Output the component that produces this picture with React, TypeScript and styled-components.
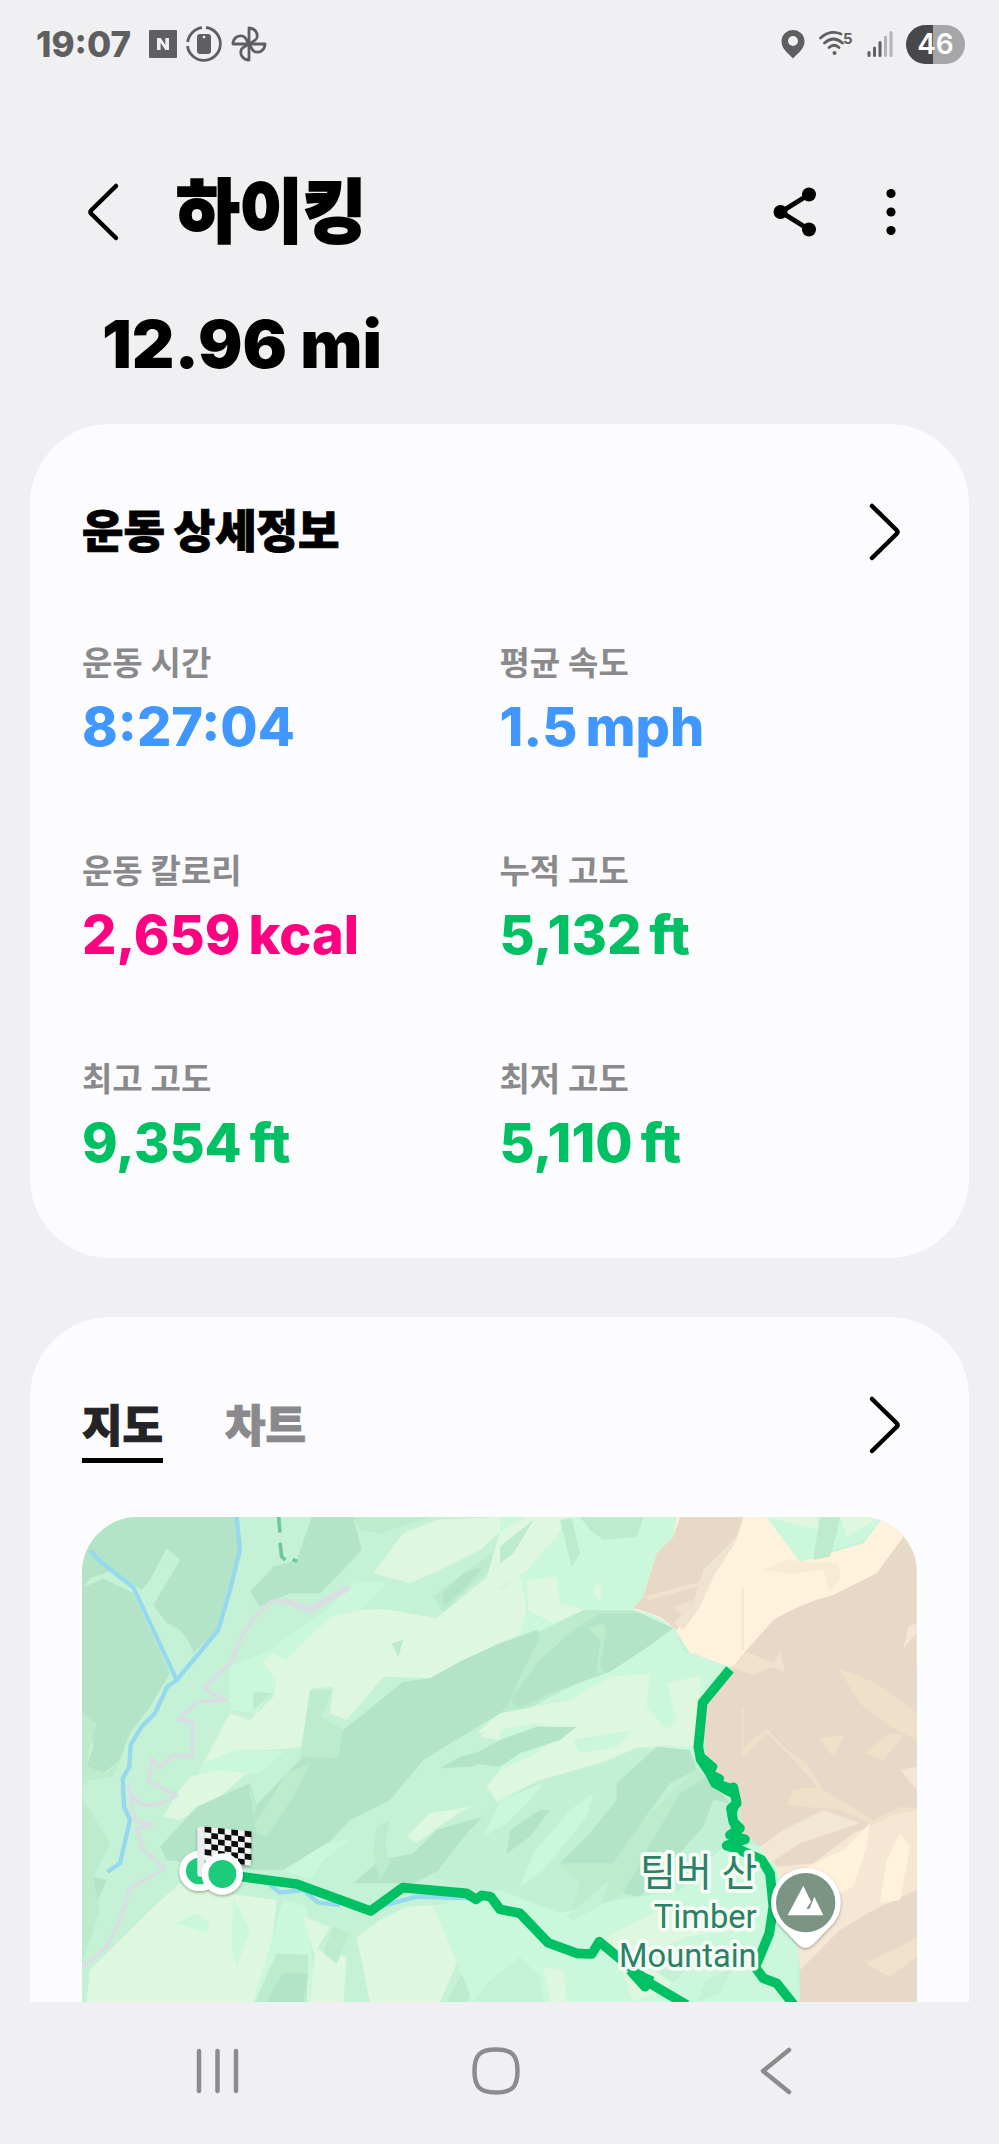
import React, { useState } from 'react';
import styled, { createGlobalStyle } from 'styled-components';

const sans = `Inter, 'Noto Sans CJK KR', sans-serif`;

const GlobalStyle = createGlobalStyle`
  * { box-sizing: border-box; }
  body { margin: 0; background: #f0f0f2; color: #000; font-family: ${sans}; }
  button { border: 0; padding: 0; background: none; font: inherit; color: inherit; cursor: pointer; }
  svg { display: block; }
`;

const Screen = styled.div`
  display: flex;
  flex-direction: column;
  height: 100vh;
  min-height: 1700px;
`;

const StatusBar = styled.div`
  display: flex;
  align-items: center;
  justify-content: space-between;
  height: 88px;
  padding: 0 34px 0 36px;
  color: #5f5f61;
`;

const StatusGroup = styled.div<{ $gap: number }>`
  display: flex;
  align-items: center;
  gap: ${(p) => p.$gap}px;
`;

const Clock = styled.time`
  margin-right: 10px;
  font-size: 35px;
  line-height: 40px;
  font-weight: 800;
`;

const Battery = styled.span`
  display: flex;
  align-items: center;
  justify-content: center;
  width: 59px;
  height: 39px;
  border-radius: 20px;
  background: linear-gradient(90deg, #48484a 46%, #a6a6a8 46%);
  color: #fff;
  font-size: 28px;
  font-weight: 600;
`;

const Header = styled.header`
  display: flex;
  align-items: center;
  height: 120px;
  margin-top: 64px;
  padding: 0 80px 0 75px;
`;

const IconButton = styled.button`
  display: flex;
  align-items: center;
  justify-content: center;
  width: 56px;
  height: 72px;
`;

const Title = styled.h1`
  flex: 1;
  margin: 0;
  padding-left: 45px;
  font-size: 69px;
  line-height: 100px;
  font-weight: 900;
  -webkit-text-stroke: 2px currentColor;
`;

const HeaderActions = styled.div`
  display: flex;
  gap: 40px;
`;

const Distance = styled.p`
  margin: 32px 0 40px;
  padding: 0 102px;
  font-size: 66px;
  line-height: 80px;
  font-weight: 900;
`;

const Card = styled.section<{ $fill?: boolean }>`
  display: flex;
  flex-direction: column;
  margin: 0 30px;
  padding: 64px 52px 83px;
  border-radius: 80px;
  background: #fcfcfe;
  ${(p) => p.$fill && `
    flex: 1;
    min-height: 0;
    margin-top: 59px;
    padding-bottom: 0;
    border-radius: 80px 80px 0 0;
  `}
`;

const CardHead = styled.div`
  display: flex;
  align-items: center;
  justify-content: space-between;
  height: 88px;
  padding-right: 4px;
`;

const CardTitle = styled.h2`
  margin: 0;
  font-size: 45px;
  line-height: 64px;
  font-weight: 900;
  -webkit-text-stroke: 1px currentColor;
`;

const Stats = styled.dl`
  display: grid;
  grid-template-columns: 1fr 1fr;
  row-gap: 90px;
  margin: 65px 0 0;
`;

const Label = styled.dt`
  font-size: 33px;
  line-height: 44px;
  font-weight: 700;
  color: #8a8a8c;
`;

const Value = styled.dd<{ $color: string }>`
  display: flex;
  gap: 8px;
  margin: 10px 0 0;
  font-size: 54px;
  line-height: 64px;
  font-weight: 800;
  color: ${(p) => p.$color};
`;

const Tabs = styled.div`
  display: flex;
  gap: 62px;
`;

const Tab = styled.button<{ $active: boolean }>`
  border: solid transparent;
  border-width: 7px 0 5px;
  border-bottom-color: ${(p) => (p.$active ? '#000' : 'transparent')};
  color: ${(p) => (p.$active ? '#242426' : '#8a8a8c')};
  font-size: 44px;
  line-height: 64px;
  font-weight: 900;
  -webkit-text-stroke: 1px currentColor;
`;

const MapFrame = styled.div`
  flex: 1;
  min-height: 0;
  margin-top: 48px;
  border-radius: 56px 56px 0 0;
  overflow: hidden;
  background: #c5f2d7;
`;

const MapSvg = styled.svg`
  width: 100%;
  height: 100%;
`;

const NavBar = styled.nav`
  display: flex;
  align-items: center;
  justify-content: space-around;
  flex: none;
  height: 142px;
  padding: 0 83px 4px 77px;
  color: #8c8c8e;
`;

const NavButton = styled.button`
  display: flex;
  justify-content: center;
  width: 96px;
`;

const Chevron = ({ back = false }: { back?: boolean }) => (
  <svg width="36" height="60" viewBox="0 0 36 60" fill="none" stroke="currentColor" strokeWidth="4.5" strokeLinecap="round" strokeLinejoin="round">
    <path d={back ? 'M31 4 6.500 28Q4.500 30 6.500 32L31 56' : 'M5 4 29.500 28Q31.500 30 29.500 32L5 56'} />
  </svg>
);

const StatusLeft = () => (
  <StatusGroup $gap={8}>
    <Clock>19:07</Clock>
    <svg width="28" height="28" viewBox="0 0 28 28">
      <rect width="28" height="28" rx="1" fill="currentColor" />
      <path d="M8 20V8H11.800L16.400 15V8H20V20H16.400L11.600 12.800V20Z" fill="#f0f0f2" />
    </svg>
    <svg width="38" height="38" viewBox="0 0 38 38" fill="none" stroke="currentColor" strokeWidth="2.800">
      <path d="M21 2.500A16.500 16.500 0 1 1 2.500 21M2.700 17A16.500 16.500 0 0 1 17 2.700" />
      <rect x="12" y="9" width="14" height="20" rx="3" fill="currentColor" stroke="none" />
      <circle cx="19" cy="12" r="1.300" fill="#f0f0f2" stroke="none" />
    </svg>
    <svg width="36" height="36" viewBox="0 0 36 36" fill="none" stroke="currentColor" strokeWidth="2.800" strokeLinejoin="round">
      {[0, 90, 180, 270].map((a) => (
        <path key={a} transform={`rotate(${a} 18 18)`} d="M18 18V2C24 2 27 7 26 11.500C25 15.500 21 15.500 18 18Z" />
      ))}
    </svg>
  </StatusGroup>
);

const StatusRight = () => (
  <StatusGroup $gap={13}>
    <svg width="24" height="30" viewBox="0 0 24 30">
      <path d="M12 1a11.500 11.500 0 0 0-11.500 11.500C.500 20 7 24 12 29.500 17 24 23.500 20 23.500 12.500A11.500 11.500 0 0 0 12 1Zm0 6a5 5 0 1 1 0 10 5 5 0 0 1 0-10Z" fill="currentColor" />
    </svg>
    <svg width="36" height="34" viewBox="0 0 36 34" fill="none" stroke="currentColor" strokeWidth="2.800" strokeLinecap="round">
      <path d="M2.500 11Q12 2.500 23 7M6.500 16Q15.500 8 24.500 16M11 20.500Q16 16 21 20.500" />
      <circle cx="16.500" cy="26" r="2" fill="currentColor" stroke="none" />
      <text x="25" y="17" fontSize="15" fontWeight="700" fill="currentColor" stroke="none">5</text>
    </svg>
    <svg width="26" height="28" viewBox="0 0 26 28" stroke="currentColor" strokeWidth="3" strokeLinecap="round">
      <path d="M2 22.500V25.500M7.500 18V25.500M13 12.500V25.500" />
      <path d="M18.500 7V25.500M24 2.500V25.500" stroke="#b4b4b6" />
    </svg>
    <Battery>46</Battery>
  </StatusGroup>
);

const MINT = '#cbf7dd';
const DARK = '#b3e4c7';
const MID = '#bcebce';
const PALE = '#def7df';
const SAND = '#e7d8c8';
const CREAM = '#fff2dc';

const west: [string, string][] = [
  [DARK, 'M36 51H500L510 150 470 280 440 390 370 460Q350 390 290 370L250 315 330 180 290 145 240 240 215 270 130 210 60 235 36 270Z'],
  [DARK, 'M36 265 100 235 190 280 300 520 240 620 180 700 150 780 100 820 50 800 70 740 60 670 36 640Z'],
  [MID, 'M36 640 80 670 60 740 50 800 110 820 150 780 130 830 60 840 36 860Z'],
  [DARK, 'M36 890 60 960 90 1000 70 1130 110 1140 70 1230 36 1330Z'],
  [MID, 'M60 930 120 1030 70 1130 90 1230 36 1390V900Z'],
  [DARK, 'M725 51H850L875 150 790 240 750 280 660 280 570 320 540 275 610 200 680 180Z'],
  [MID, 'M850 51 870 90 930 100 1080 51Z'],
  [PALE, 'M910 220 1000 100 1100 60 1290 51V95L1230 150 1130 200 1020 250Z'],
  [MID, 'M1090 290 1160 235 1290 140V190L1200 260 1120 335Z'],
  [DARK, 'M1120 280 1180 220 1240 200 1180 270 1120 320Z'],
  [MINT, 'M480 500 600 450 640 420 760 340 850 250 950 250 860 340 720 430 640 520 560 640 480 630Z'],
  [PALE, 'M610 460 650 480Q720 400 790 350 880 320 960 330L1100 355 1290 200V430L1180 480 1080 535 940 530 830 660 780 640 790 560 725 565 700 740 600 750 500 750 400 790 480 640 540 660 610 590 620 540 580 490Z'],
  [MID, 'M550 575 605 580 550 630ZM965 430 1000 420 985 470Z'],
  [MID, 'M720 570 785 570 755 650 820 690 810 775 690 770Z'],
  [MINT, 'M400 790 500 750 640 755 570 820 380 830Z'],
  [PALE, 'M360 830 440 810 530 820 450 890 330 960 280 950 320 880Z'],
  [DARK, 'M1290 430 1180 480 1080 535 1000 545 820 690 805 775 700 770 640 830 560 915 540 850 380 920 270 1040 290 1080 560 1110 700 1110 840 960 960 900 1060 780 1290 640Z'],
  [MID, 'M535 850 560 915 550 970 600 900 650 820 720 790 670 890 590 1010 560 1000Z'],
  [PALE, 'M1290 650 1230 710 1290 720ZM1200 920 1080 940 1010 1010 1040 1030 1120 970ZM1290 840 1260 850 1290 880Z'],
  [DARK, 'M1290 740 1170 770 1110 805 1200 800 1290 775ZM1290 940 1200 960 1100 990 1030 1060 930 1080 850 1150 1030 1150 1150 1090 1180 1140 1290 1050Z'],
  [MID, 'M920 980 960 960 945 1030 960 1090 930 1140 910 1060Z'],
  [MINT, 'M640 1110 770 1030 840 1020 760 1080 720 1140Z'],
  [PALE, 'M50 1506 60 1410 250 1220 330 1150 470 1180 620 1200 600 1380 550 1506Z'],
  [MINT, 'M490 1190 540 1290 500 1400 485 1340ZM320 1270 380 1240 420 1270 410 1300ZM640 1200 710 1220 740 1506H550Z'],
  [PALE, 'M700 1250 780 1280 740 1350 830 1370 820 1506H720L735 1370ZM860 1310 930 1260 1010 1220 1200 1210 1260 1240 1160 1390 1110 1506H900Z'],
  [MID, 'M620 1360 715 1365 710 1506H555ZM1200 1380 1240 1370 1190 1506H1130ZM790 1280 840 1300 800 1390 760 1360Z'],
  [DARK, 'M640 1420 715 1420 700 1506H590Z'],
  [MINT, 'M1190 1310 1290 1290V1506H1200L1240 1370 1170 1380Z'],
];

const east: [string, string][] = [
  [MINT, 'M0 51H530L520 110 470 160 430 290 400 330 250 340 100 400 0 430Z'],
  [PALE, 'M0 95 80 51H200L170 110 80 210 -60 300ZM-80 340 60 220 80 330 60 400 0 430ZM80 240 170 230 180 310 255 330 160 370 85 330ZM290 240 305 270 300 300 280 280Z'],
  [MID, 'M0 140 100 60 40 160 0 190ZM180 60 215 55 240 160 215 200Z'],
  [MID, 'M240 51H430L410 110 310 120 270 90Z'],
  [CREAM, 'M530 51H800L900 185 1090 130 1150 51H1290V500H690L570 460 520 380 400 330 430 290 470 160 520 110Z'],
  [SAND, 'M540 51H730L710 110 610 210 580 310 530 390 480 350 420 330 400 325 430 290 470 160 520 110Z'],
  [SAND, 'M1210 110 1250 130V1506H900V1360L860 1170 780 1040 730 1000 710 870 620 790 605 600 700 500 740 450 820 360Q900 310 1000 285L1130 220Z'],
  [MINT, 'M0 470 260 340 400 330Q490 345 530 400 540 460 580 470L690 505 605 600 580 740 600 820 690 910 690 1020 780 1040Q850 1100 880 1220 910 1300 890 1400L900 1506H0Z'],
  [MID, 'M250 330 400 330 510 380 430 440 330 500 210 560 60 640 0 640V430L110 400Z'],
  [DARK, 'M300 340 420 340 520 385 430 450 330 515 150 580 60 625 30 600 120 480 220 390Z'],
  [DARK, 'M0 430 110 390 120 410 70 510 20 620 0 640Z'],
  [MID, 'M265 385 310 370 320 400 300 490 315 520 290 520 300 420Z'],
  [PALE, 'M-70 700 0 640 210 600 330 530 480 520 600 500 600 600 580 740 480 735 390 750 300 800 200 830 100 870 0 920 -40 860 0 810 110 760 200 690 100 670 0 690Z'],
  [MINT, 'M460 450 580 460 690 505 500 550 530 660 500 690 440 620ZM220 720 330 700 400 690 350 740 240 760Z'],
  [DARK, 'M-120 785 0 720 110 680 230 680 180 720 60 760 0 800Z'],
  ['#c2f0d4', 'M-100 1000 0 900 120 840 300 790 420 740 620 780 700 880 690 1020 530 1180 300 1220 180 1250 0 1200 -200 1130Z'],
  [MINT, 'M0 900 130 850 90 900 20 970 -50 1010ZM210 930 280 880 260 950 130 1110 60 1160 100 1060Z'],
  [DARK, 'M350 850 470 740 570 750 590 810 510 850 430 960 340 1090 240 1110 180 1090 260 1010 350 900Z'],
  [MID, 'M180 1090 340 1090 430 960 590 810 620 830 470 1010 370 1180 260 1240 210 1240 240 1150Z'],
  [DARK, 'M620 830 690 910 640 900 610 980 520 1080 420 1190 370 1180 470 1000 540 880ZM120 930 150 930 90 1010 20 1060 30 990Z'],
  [MINT, 'M-200 1220 0 1170 180 1240 350 1200 620 1160 800 1050 860 1170 895 1350 890 1506H-80Z'],
  [PALE, 'M300 1320 480 1230 700 1230 780 1280 560 1310 380 1390ZM130 1400 190 1410 200 1506H150ZM360 1390 480 1400 530 1450 400 1506Z'],
  ['#c5f2d7', 'M200 1250 330 1140 300 1220 220 1260ZM-40 1450 60 1370 120 1430 130 1506H-80ZM620 1440 700 1400 660 1480 590 1506ZM460 1410 620 1340 520 1450Z'],
  [MINT, 'M800 51H1150L1090 120 900 185Z'],
  [PALE, 'M800 51H950L960 90 870 70ZM1020 51H1140L1040 110Z'],
  [MID, 'M960 51H1020L1010 100 990 170 940 180Z'],
  ['#f7ebd5', 'M790 210 860 180 980 190 1010 190 1025 230 990 275 970 210 870 220Z'],
  ['#f1e3d1', 'M730 51 710 120 640 230 600 320 550 390 520 370 580 310 610 210 710 110Z'],
  ['#f1e2ce', 'M700 505 740 455 820 490 840 450 855 515 820 500 760 525ZM430 290 620 240 610 255 450 300ZM520 320 580 300 550 350Z'],
  ['#f0e0ca', 'M1015 505 1130 550 1250 640V720L1170 680 1080 610ZM730 770 735 740 800 685 850 740 920 790 970 870 1120 960 1200 920 1250 925V980L1110 970 1020 930 860 915 880 870 950 860 900 790 800 700ZM955 715 1035 705 1000 770ZM1170 700 1210 705 1150 780 1095 760Z'],
  ['#f4e6d5', 'M1225 380 1250 370V400L1210 445ZM1200 810 1250 800V870ZM780 1040 850 990 970 930 1080 970 900 1030 810 1090Z'],
  ['#f5e7d4', 'M830 1100 940 1090 1060 1000 1180 945 1250 930V1170L1120 1230 1020 1290 940 1370 900 1410 890 1300Z'],
  [CREAM, 'M920 1100 1030 1050 1110 970 1100 1040 1060 1160 1000 1190ZM1160 1080 1200 1000 1230 1040 1200 1200 1140 1210Z'],
  ['#f0e2cd', 'M1095 1390 1200 1340 1250 1310V1370L1170 1430Z'],
];

const Flag = () => (
  <g>
    <rect x="382" y="980" width="22" height="150" rx="8" fill="#ececee" />
    <g transform="translate(404 980) skewY(6)">
      <rect width="138" height="102" fill="#f2f2f2" />
      {Array.from({ length: 42 }, (_, i) => ({ c: i % 7, r: Math.floor(i / 7) }))
        .filter(({ c, r }) => (c + r) % 2 === 0)
        .map(({ c, r }) => (
          <rect key={`${c}-${r}`} x={c * 20} y={r * 17} width="20" height="17" fill="#080808" />
        ))}
    </g>
  </g>
);

const TrailMap = () => (
  <MapSvg viewBox="36 51 2505 1455" preserveAspectRatio="xMidYMin slice" role="img" aria-label="하이킹 경로 지도">
    <defs>
      <filter id="lift" x="-20%" y="-20%" width="140%" height="150%">
        <feDropShadow dx="0" dy="4" stdDeviation="5" floodOpacity="0.35" />
      </filter>
    </defs>
    <rect x="36" y="51" width="2505" height="1455" fill="#c5f2d7" />
    {west.map(([fill, d], i) => <path key={i} d={d} fill={fill} />)}
    <g transform="translate(1290 0)">
      {east.map(([fill, d], i) => <path key={i} d={d} fill={fill} />)}
      <path d="M728 265V450M728 620V770M800 690 960 860" stroke="#f1e2ce" strokeWidth="5" fill="none" />
    </g>
    <g fill="none" strokeLinejoin="round">
      <g stroke="#96d8ed" strokeWidth="13">
        <path d="M60 152 95 188 190 262 320 540M500 51 510 150 480 270 445 390 320 540 292 560 255 640 215 680 182 735 178 800 158 835 162 920 180 960 150 1090 112 1116" />
        <path d="M600 1155 630 1178 700 1170 745 1208 810 1215M930 1220 1040 1190 1200 1195" />
      </g>
      <g stroke="#d8dfe2" strokeWidth="12">
        <path d="M840 260 720 325 620 300Q580 310 520 400L480 490 405 560 415 575 465 600 380 605 325 660 370 665 365 770 310 765 270 800 245 775 235 845 320 885Q250 930 210 910 175 890 175 850M180 890 195 960 245 975 200 985 220 1050 285 1105 180 1165 150 1260 110 1340 40 1400" />
        <path d="M830 265 720 330 640 300" strokeWidth="20" />
      </g>
      <path d="M626 51 630 98M630 128 635 170 646 180M668 178 682 184" stroke="#6fc7a2" strokeWidth="11" />
      <g stroke="#00c064" strokeWidth="29">
        <path d="M457 1122 680 1152 902 1233 998 1163 1190 1180 1218 1198 1235 1186 1262 1190 1290 1228 1350 1240 1434 1328 1520 1360 1565 1362 1588 1325 1740 1450 1850 1515" />
        <path d="M1680 1410 1725 1460 1740 1425" />
        <path d="M1980 508 1898 608 1885 740 1892 778 1920 820 1935 850 1980 875 1990 862 2000 910 1983 925 1990 965 2010 985 1980 1005 2025 1018 1970 1037 2010 1050 2075 1080 2100 1120 2110 1220 2098 1300 2065 1380 2055 1400 2080 1435 2120 1450 2172 1515" />
        <path d="M1895 770 1930 800 1920 820 1950 835 1945 850 1985 865 2000 900 1985 950 2000 1000 2000 1050" strokeWidth="24" />
      </g>
    </g>
    <g filter="url(#lift)">
      <circle cx="388" cy="1113" r="50" fill="#1fcb7c" stroke="#fff" strokeWidth="20" />
      <Flag />
      <circle cx="457" cy="1122" r="52" fill="#1fcb7c" stroke="#fff" strokeWidth="20" />
    </g>
    <g filter="url(#lift)">
      <path d="M2207 1104A104 104 0 0 0 2103 1208Q2103 1252 2138 1284L2184 1332Q2206 1354 2230 1332L2276 1284Q2312 1252 2312 1208A104 104 0 0 0 2207 1104Z" fill="#fff" />
    </g>
    <circle cx="2207" cy="1208" r="89" fill="#7b9483" />
    <path d="M2153 1246 2200 1157 2223 1205 2209 1226H2219L2233 1190 2260 1246Z" fill="#fff" />
    <g textAnchor="end" fill="#2a8265" stroke="#f4fbf5" strokeWidth="22" strokeLinejoin="round" paintOrder="stroke" fontFamily="Roboto, 'Noto Sans CJK KR', sans-serif">
      <text x="2062" y="1158" fontSize="117">팀버 산</text>
      <text x="2060" y="1284" fontSize="98">Timber</text>
      <text x="2060" y="1401" fontSize="98">Mountain</text>
    </g>
  </MapSvg>
);

const stats = [
  { label: '운동 시간', value: '8:27:04', color: '#4097ff' },
  { label: '평균 속도', value: '1.5', unit: 'mph', color: '#4097ff' },
  { label: '운동 칼로리', value: '2,659', unit: 'kcal', color: '#ff0080' },
  { label: '누적 고도', value: '5,132', unit: 'ft', color: '#00c064' },
  { label: '최고 고도', value: '9,354', unit: 'ft', color: '#00c064' },
  { label: '최저 고도', value: '5,110', unit: 'ft', color: '#00c064' },
];

export default function App() {
  const [tab, setTab] = useState('지도');
  return (
    <>
      <GlobalStyle />
      <Screen>
        <StatusBar>
          <StatusLeft />
          <StatusRight />
        </StatusBar>
        <Header>
          <IconButton aria-label="뒤로"><Chevron back /></IconButton>
          <Title>하이킹</Title>
          <HeaderActions>
            <IconButton aria-label="공유">
              <svg width="44" height="52" viewBox="0 0 44 52">
                <path d="M36 8.500 8 26 36 43.500" fill="none" stroke="#000" strokeWidth="5" />
                <circle cx="36" cy="8.500" r="7" /><circle cx="7.500" cy="26" r="7" /><circle cx="36" cy="43.500" r="7" />
              </svg>
            </IconButton>
            <IconButton aria-label="옵션 더보기">
              <svg width="12" height="48" viewBox="0 0 12 48">
                <circle cx="6" cy="5.500" r="4.600" /><circle cx="6" cy="24" r="4.600" /><circle cx="6" cy="42.500" r="4.600" />
              </svg>
            </IconButton>
          </HeaderActions>
        </Header>
        <Distance>12.96 mi</Distance>
        <Card>
          <CardHead>
            <CardTitle>운동 상세정보</CardTitle>
            <IconButton aria-label="운동 상세정보 열기"><Chevron /></IconButton>
          </CardHead>
          <Stats>
            {stats.map((s) => (
              <div key={s.label}>
                <Label>{s.label}</Label>
                <Value $color={s.color}>
                  <span>{s.value}</span>
                  {s.unit && <span>{s.unit}</span>}
                </Value>
              </div>
            ))}
          </Stats>
        </Card>
        <Card $fill>
          <CardHead>
            <Tabs role="tablist">
              {['지도', '차트'].map((name) => (
                <Tab key={name} role="tab" aria-selected={tab === name} $active={tab === name} onClick={() => setTab(name)}>
                  {name}
                </Tab>
              ))}
            </Tabs>
            <IconButton aria-label="지도 열기"><Chevron /></IconButton>
          </CardHead>
          <MapFrame><TrailMap /></MapFrame>
        </Card>
        <NavBar>
          <NavButton aria-label="최근 앱">
            <svg width="44" height="50" viewBox="0 0 44 50" stroke="currentColor" strokeWidth="4.500" strokeLinecap="round">
              <path d="M4 5V45M22.500 5V45M41 5V45" />
            </svg>
          </NavButton>
          <NavButton aria-label="홈">
            <svg width="50" height="50" viewBox="0 0 50 50" fill="none" stroke="currentColor" strokeWidth="4.500">
              <path d="M25 3.500C41 3.500 46.500 9 46.500 25S41 46.500 25 46.500 3.500 41 3.500 25 9 3.500 25 3.500Z" />
            </svg>
          </NavButton>
          <NavButton aria-label="뒤로 가기">
            <svg width="34" height="50" viewBox="0 0 34 50" fill="none" stroke="currentColor" strokeWidth="4.500" strokeLinecap="round" strokeLinejoin="round">
              <path d="M30 4 4 25 30 46" />
            </svg>
          </NavButton>
        </NavBar>
      </Screen>
    </>
  );
}
